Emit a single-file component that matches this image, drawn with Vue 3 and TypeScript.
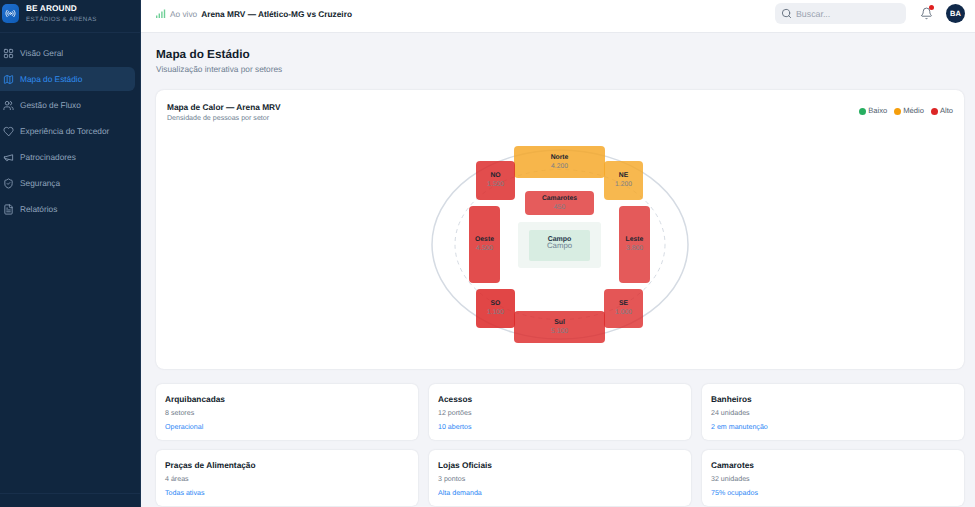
<script setup lang="ts">
interface NavItem { label: string; icon: string; active?: boolean }
interface Sector { name: string; value: string; x: number; y: number; w: number; h: number; color: string }
interface Place { title: string; sub: string; status: string }

const nav: NavItem[] = [
  { label: 'Visão Geral', icon: 'grid' },
  { label: 'Mapa do Estádio', icon: 'map', active: true },
  { label: 'Gestão de Fluxo', icon: 'users' },
  { label: 'Experiência do Torcedor', icon: 'heart' },
  { label: 'Patrocinadores', icon: 'megaphone' },
  { label: 'Segurança', icon: 'shield' },
  { label: 'Relatórios', icon: 'file' },
]

const icons: Record<string, string> = {
  grid: '<rect x="3" y="3" width="7" height="7" rx="1.5"/><rect x="14" y="3" width="7" height="7" rx="1.5"/><rect x="14" y="14" width="7" height="7" rx="1.5"/><rect x="3" y="14" width="7" height="7" rx="1.5"/>',
  map: '<path d="M14.106 5.553a2 2 0 0 0 1.788 0l3.659-1.83A1 1 0 0 1 21 4.619v12.764a1 1 0 0 1-.553.894l-4.553 2.277a2 2 0 0 1-1.788 0l-4.212-2.106a2 2 0 0 0-1.788 0l-3.659 1.83A1 1 0 0 1 3 19.381V6.618a1 1 0 0 1 .553-.894l4.553-2.277a2 2 0 0 1 1.788 0z"/><path d="M15 5.764v15"/><path d="M9 3.236v15"/>',
  users: '<path d="M16 21v-2a4 4 0 0 0-4-4H6a4 4 0 0 0-4 4v2"/><circle cx="9" cy="7" r="4"/><path d="M22 21v-2a4 4 0 0 0-3-3.87"/><path d="M16 3.13a4 4 0 0 1 0 7.75"/>',
  heart: '<path d="M19 14c1.49-1.46 3-3.21 3-5.5A5.5 5.5 0 0 0 16.5 3c-1.76 0-3 .5-4.5 2-1.5-1.5-2.74-2-4.5-2A5.5 5.5 0 0 0 2 8.5c0 2.3 1.5 4.05 3 5.5l7 7Z"/>',
  megaphone: '<path d="m3 11 18-5v12L3 14v-3z"/><path d="M11.6 16.8a3 3 0 1 1-5.8-1.6"/>',
  shield: '<path d="M20 13c0 5-3.5 7.5-7.66 8.95a1 1 0 0 1-.67-.01C7.5 20.5 4 18 4 13V6a1 1 0 0 1 1-1c2 0 4.5-1.2 6.24-2.72a1.17 1.17 0 0 1 1.52 0C14.51 3.81 17 5 19 5a1 1 0 0 1 1 1z"/><path d="m9 12 2 2 4-4"/>',
  file: '<path d="M15 2H6a2 2 0 0 0-2 2v16a2 2 0 0 0 2 2h12a2 2 0 0 0 2-2V7Z"/><path d="M14 2v4a2 2 0 0 0 2 2h4"/><path d="M10 9H8"/><path d="M16 13H8"/><path d="M16 17H8"/>',
}

const sectors: Sector[] = [
  { name: 'Norte', value: '4.200', x: 83, y: 1, w: 91, h: 32, color: 'rgba(245,166,35,.82)' },
  { name: 'NO', value: '1.500', x: 45, y: 16, w: 39, h: 39, color: 'rgba(220,38,38,.82)' },
  { name: 'NE', value: '1.200', x: 173, y: 16, w: 39, h: 39, color: 'rgba(245,166,35,.8)' },
  { name: 'Camarotes', value: '450', x: 94, y: 46, w: 69, h: 24, color: 'rgba(220,38,38,.75)' },
  { name: 'Oeste', value: '4.500', x: 38, y: 61, w: 31, h: 77, color: 'rgba(220,38,38,.82)' },
  { name: 'Leste', value: '3.800', x: 188, y: 61, w: 31, h: 77, color: 'rgba(220,38,38,.76)' },
  { name: 'SO', value: '1.100', x: 45, y: 144, w: 39, h: 39, color: 'rgba(220,38,38,.85)' },
  { name: 'SE', value: '1.000', x: 173, y: 144, w: 39, h: 39, color: 'rgba(220,38,38,.78)' },
  { name: 'Sul', value: '5.100', x: 83, y: 166, w: 91, h: 32, color: 'rgba(220,38,38,.8)' },
]

const places: Place[] = [
  { title: 'Arquibancadas', sub: '8 setores', status: 'Operacional' },
  { title: 'Acessos', sub: '12 portões', status: '10 abertos' },
  { title: 'Banheiros', sub: '24 unidades', status: '2 em manutenção' },
  { title: 'Praças de Alimentação', sub: '4 áreas', status: 'Todas ativas' },
  { title: 'Lojas Oficiais', sub: '3 pontos', status: 'Alta demanda' },
  { title: 'Camarotes', sub: '32 unidades', status: '75% ocupados' },
]

const legend = [
  { label: 'Baixo', color: '#27ae60' },
  { label: 'Médio', color: '#f59e0b' },
  { label: 'Alto', color: '#dc2626' },
]

function sectorStyle(s: Sector) {
  return {
    left: s.x + 'px',
    top: s.y + 'px',
    width: s.w + 'px',
    height: s.h + 'px',
    background: s.color,
  }
}
</script>

<template>
  <div class="shell">
    <aside class="sidebar">
      <div class="brand">
        <div class="logo">
          <svg viewBox="0 0 24 24" width="11" height="11" fill="none" stroke="#fff" stroke-width="2" stroke-linecap="round" stroke-linejoin="round">
            <path d="M4.9 19.1C1 15.2 1 8.8 4.9 4.9" />
            <path d="M7.8 16.2c-2.3-2.3-2.3-6.1 0-8.5" />
            <circle cx="12" cy="12" r="2" />
            <path d="M16.2 7.8c2.3 2.3 2.3 6.1 0 8.5" />
            <path d="M19.1 4.9C23 8.8 23 15.1 19.1 19" />
          </svg>
        </div>
        <div class="brand-text">
          <div class="brand-name">BE AROUND</div>
          <div class="brand-sub">ESTÁDIOS &amp; ARENAS</div>
        </div>
      </div>

      <nav class="nav">
        <a v-for="item in nav" :key="item.label" class="nav-item" :class="{ active: item.active }">
          <svg viewBox="0 0 24 24" width="11" height="11" fill="none" stroke="currentColor" stroke-width="1.8" stroke-linecap="round" stroke-linejoin="round" v-html="icons[item.icon]"></svg>
          <span>{{ item.label }}</span>
        </a>
      </nav>

      <div class="side-foot"></div>
    </aside>

    <div class="content">
      <header class="topbar">
        <div class="live">
          <svg width="10" height="9" viewBox="0 0 10 9" fill="#6fcf97">
            <rect x="0" y="6.5" width="1.4" height="2.5" />
            <rect x="2.6" y="4.5" width="1.4" height="4.5" />
            <rect x="5.2" y="2.5" width="1.4" height="6.5" />
            <rect x="7.8" y="0.5" width="1.4" height="8.5" />
          </svg>
          <span class="live-label">Ao vivo</span>
          <span class="live-match">Arena MRV — Atlético-MG vs Cruzeiro</span>
        </div>
        <div class="top-right">
          <div class="search">
            <svg viewBox="0 0 24 24" width="11" height="11" fill="none" stroke="#5f6b7a" stroke-width="2" stroke-linecap="round" stroke-linejoin="round">
              <circle cx="11" cy="11" r="8" />
              <path d="m21 21-4.3-4.3" />
            </svg>
            <span>Buscar...</span>
          </div>
          <div class="bell">
            <svg viewBox="0 0 24 24" width="13" height="13" fill="none" stroke="#5f6b7a" stroke-width="1.7" stroke-linecap="round" stroke-linejoin="round">
              <path d="M10.268 21a2 2 0 0 0 3.464 0" />
              <path d="M3.262 15.326A1 1 0 0 0 4 17h16a1 1 0 0 0 .74-1.673C19.41 13.956 18 12.499 18 8A6 6 0 0 0 6 8c0 4.499-1.411 5.956-2.738 7.326" />
            </svg>
            <i class="bell-dot"></i>
          </div>
          <div class="avatar">BA</div>
        </div>
      </header>

      <main class="main">
        <h1>Mapa do Estádio</h1>
        <p class="page-sub">Visualização interativa por setores</p>

        <section class="map-card">
          <div class="map-head">
            <div>
              <h2>Mapa de Calor — Arena MRV</h2>
              <p>Densidade de pessoas por setor</p>
            </div>
            <div class="legend">
              <div v-for="l in legend" :key="l.label" class="legend-item">
                <i :style="{ background: l.color }"></i>{{ l.label }}
              </div>
            </div>
          </div>

          <div class="stadium">
            <svg class="rings" width="258" height="200" viewBox="0 0 258 200" fill="none">
              <ellipse cx="129" cy="99.5" rx="128" ry="94.5" stroke="#d5dbe3" stroke-width="1.5" />
              <ellipse cx="129" cy="99.5" rx="105" ry="75" stroke="#d5dbe3" stroke-width="1" stroke-dasharray="4 4" />
            </svg>
            <div class="pitch">
              <div class="pitch-inner">Campo</div>
              <span class="pitch-ghost">Campo</span>
            </div>
            <div v-for="s in sectors" :key="s.name" class="sector" :style="sectorStyle(s)">
              <strong>{{ s.name }}</strong>
              <span>{{ s.value }}</span>
            </div>
          </div>
        </section>

        <section class="places">
          <div v-for="p in places" :key="p.title" class="place">
            <h3>{{ p.title }}</h3>
            <p>{{ p.sub }}</p>
            <a>{{ p.status }}</a>
          </div>
        </section>
      </main>
    </div>
  </div>
</template>

<style>
html, body {
  margin: 0;
  overflow: hidden;
}
</style>

<style scoped>
* {
  box-sizing: border-box;
}
.shell {
  display: flex;
  height: 507px;
  overflow: hidden;
  font-family: "Liberation Sans", Arial, sans-serif;
  text-rendering: geometricPrecision;
  background: #f3f4f8;
}
.sidebar {
  width: 141px;
  flex-shrink: 0;
  display: flex;
  flex-direction: column;
  background: #10263f;
  border-right: 1px solid #1a3350;
}
.brand {
  height: 33px;
  display: flex;
  align-items: center;
  gap: 7px;
  padding: 0 0 6px 2px;
  border-bottom: 1px solid #182f4b;
}
.logo {
  width: 17px;
  height: 19px;
  border-radius: 5px;
  background: linear-gradient(135deg, #1f6fd0, #0f5cb5);
  display: flex;
  align-items: center;
  justify-content: center;
}
.brand-name {
  font-size: 8.3px;
  font-weight: 700;
  line-height: 11px;
  color: #fff;
  letter-spacing: .1px;
}
.brand-sub {
  font-size: 6.2px;
  line-height: 9px;
  margin-top: 1px;
  color: #7f92a9;
  letter-spacing: .4px;
}
.nav {
  display: flex;
  flex-direction: column;
  gap: 2px;
  padding: 8px 5px 0 0;
  flex: 1;
}
.nav-item {
  height: 24px;
  display: flex;
  align-items: center;
  gap: 6px;
  padding: 0 0 0 3px;
  border-radius: 0 6px 6px 0;
  font-size: 8.3px;
  color: #8fa3bb;
}
.nav-item.active {
  background: #1b3857;
  color: #2f8cf0;
}
.side-foot {
  height: 14px;
  border-top: 1px solid #182f4b;
}
.content {
  flex: 1;
  min-width: 0;
  display: flex;
  flex-direction: column;
}
.topbar {
  height: 33px;
  flex-shrink: 0;
  background: #fff;
  border-bottom: 1px solid #e8eaef;
  display: flex;
  align-items: center;
  justify-content: space-between;
  padding: 0 10px 5px 15px;
}
.live {
  display: flex;
  align-items: center;
  font-size: 8.3px;
}
.live-label {
  margin-left: 4px;
  color: #8a94a3;
}
.live-match {
  margin-left: 4px;
  font-weight: 700;
  color: #111c2b;
}
.top-right {
  display: flex;
  align-items: center;
}
.search {
  width: 131px;
  height: 21px;
  border-radius: 6px;
  background: #eef0f4;
  display: flex;
  align-items: center;
  gap: 4px;
  padding-left: 6px;
  font-size: 8.8px;
  color: #9aa3b0;
}
.bell {
  position: relative;
  width: 13px;
  height: 13px;
  margin-left: 14px;
  line-height: 0;
}
.bell-dot {
  position: absolute;
  right: -1px;
  top: -2px;
  width: 5px;
  height: 5px;
  border-radius: 50%;
  background: #e02020;
}
.avatar {
  width: 19px;
  height: 19px;
  margin-left: 13px;
  border-radius: 50%;
  background: #10294a;
  color: #fff;
  font-size: 7.5px;
  font-weight: 700;
  display: flex;
  align-items: center;
  justify-content: center;
}
.main {
  flex: 1;
  padding: 14px 11px 0 15px;
  min-height: 0;
}
h1 {
  margin: 0;
  font-size: 11.8px;
  line-height: 15px;
  font-weight: 700;
  color: #111c2b;
}
.page-sub {
  margin: 2px 0 0;
  font-size: 8.3px;
  line-height: 11px;
  color: #6f7f92;
}
.map-card {
  height: 279px;
  margin-top: 15px;
  background: #fff;
  border-radius: 8px;
  box-shadow: 0 0 2px rgba(20, 30, 50, .12);
  padding: 12px 11px 0 11px;
}
.map-head {
  display: flex;
  justify-content: space-between;
  align-items: flex-start;
}
h2 {
  margin: 0;
  font-size: 8.3px;
  line-height: 11px;
  font-weight: 700;
  color: #111c2b;
}
.map-head p {
  margin: 0;
  font-size: 7.1px;
  line-height: 10px;
  color: #6f7f92;
}
.legend {
  display: flex;
  gap: 7px;
  padding-top: 4px;
}
.legend-item {
  display: flex;
  align-items: center;
  gap: 2px;
  font-size: 7.6px;
  line-height: 10px;
  color: #4d5a6a;
}
.legend-item i {
  width: 7px;
  height: 7px;
  border-radius: 50%;
}
.stadium {
  position: relative;
  width: 258px;
  height: 200px;
  margin: 22px auto 0;
}
.rings {
  position: absolute;
  left: 0;
  top: 0;
}
.pitch {
  position: absolute;
  left: 87px;
  top: 77px;
  width: 83px;
  height: 46px;
  background: #f0f6f3;
  border-radius: 3px;
  display: flex;
  align-items: center;
  justify-content: center;
}
.pitch-inner {
  width: 61px;
  height: 31px;
  background: #d8ede2;
  border-radius: 2px;
  text-align: center;
  padding-top: 5px;
  font-size: 7px;
  line-height: 9px;
  font-weight: 700;
  color: #26384a;
}
.pitch-ghost {
  position: absolute;
  left: 0;
  right: 0;
  top: 18px;
  text-align: center;
  font-size: 7.8px;
  line-height: 11px;
  color: #6e8293;
}
.sector {
  position: absolute;
  border-radius: 4px;
  display: flex;
  flex-direction: column;
  align-items: center;
  justify-content: center;
  gap: 1px;
  font-size: 6.8px;
  line-height: 8px;
}
.sector strong {
  font-weight: 700;
  color: #1c2530;
}
.sector span {
  color: #7d7f86;
}
.places {
  display: grid;
  grid-template-columns: repeat(3, 1fr);
  gap: 10px 11px;
  margin-top: 15px;
}
.place {
  height: 56px;
  background: #fff;
  border-radius: 6px;
  box-shadow: 0 0 2px rgba(20, 30, 50, .12);
  padding: 10px 9px 0;
}
h3 {
  margin: 0;
  font-size: 8.3px;
  line-height: 11px;
  font-weight: 700;
  color: #111c2b;
}
.place p {
  margin: 3px 0 0;
  font-size: 7.1px;
  line-height: 10px;
  color: #6f7a88;
}
.place a {
  display: block;
  margin-top: 4px;
  font-size: 7.1px;
  line-height: 10px;
  color: #2b86f5;
}
</style>
